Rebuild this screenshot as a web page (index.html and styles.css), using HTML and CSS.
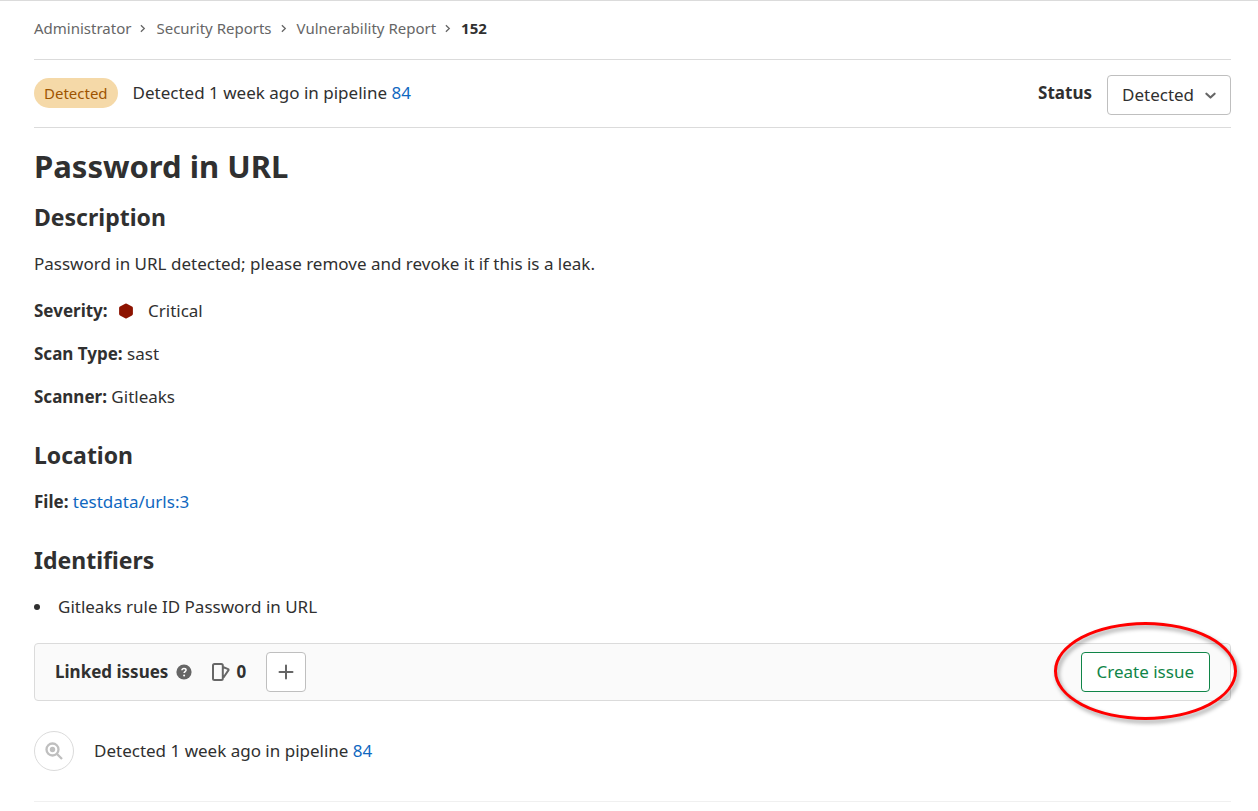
FILE: index.html
```html
<!DOCTYPE html>
<html lang="en">
<head>
<meta charset="utf-8">
<meta name="viewport" content="width=device-width, initial-scale=1">
<title>Password in URL</title>
<link rel="stylesheet" href="styles.css">
</head>
<body>
<div class="page">
  <nav class="breadcrumbs" aria-label="Breadcrumbs">
    <a href="#">Administrator</a>
    <svg class="separator" viewBox="0 0 10 10" aria-hidden="true"><path d="M3 2.500 5.600 5 3 7.500"/></svg>
    <a href="#">Security Reports</a>
    <svg class="separator" viewBox="0 0 10 10" aria-hidden="true"><path d="M3 2.500 5.600 5 3 7.500"/></svg>
    <a href="#">Vulnerability Report</a>
    <svg class="separator" viewBox="0 0 10 10" aria-hidden="true"><path d="M3 2.500 5.600 5 3 7.500"/></svg>
    <a class="current" href="#" aria-current="page">152</a>
  </nav>

  <header class="status-bar">
    <span class="badge">Detected</span>
    <span class="status-text">Detected 1 week ago in pipeline <a href="#">84</a></span>
    <label class="status-label" for="status">Status</label>
    <div class="select">
      <select id="status"><option>Detected</option></select>
      <svg class="chevron" viewBox="0 0 12 12" aria-hidden="true"><path d="m2.200 4.400 3.800 3.500 3.800-3.500"/></svg>
    </div>
  </header>

  <main>
    <h1>Password in URL</h1>

    <section>
      <h2>Description</h2>
      <p class="description">Password in URL detected; please remove and revoke it if this is a leak.</p>
      <ul class="fields">
        <li><strong>Severity:</strong> <svg class="severity-icon" viewBox="0 0 16 16" aria-hidden="true"><path d="M7.2.8a1.7 1.7 0 0 1 1.6 0l5.2 2.8a1.6 1.6 0 0 1 .9 1.4v6a1.6 1.6 0 0 1-.9 1.4l-5.2 2.8a1.7 1.7 0 0 1-1.6 0L2 12.4a1.6 1.6 0 0 1-.9-1.4V5A1.600 1.600 0 0 1 2 3.600z"/></svg>Critical</li>
        <li><strong>Scan Type:</strong> sast</li>
        <li><strong>Scanner:</strong> Gitleaks</li>
      </ul>
    </section>

    <section>
      <h2>Location</h2>
      <p><strong>File:</strong> <a href="#">testdata/urls:3</a></p>
    </section>

    <section>
      <h2>Identifiers</h2>
      <ul class="identifiers"><li>Gitleaks rule ID Password in URL</li></ul>
    </section>

    <section class="linked">
      <h3>Linked issues</h3>
      <a class="help" href="#" aria-label="Read more about related issues">
        <svg viewBox="0 0 16 16" aria-hidden="true"><circle cx="8" cy="8" r="7.600" fill="#666"/><path d="M5.900 6.300c.1-1.200.9-1.900 2.100-1.900s2.100.7 2.100 1.700c0 1.500-2 1.600-2 3" fill="none" stroke="#fff" stroke-width="1.500"/><circle cx="8.100" cy="11.400" r="1" fill="#fff"/></svg>
      </a>
      <svg class="issues-icon" viewBox="0 0 18 18" aria-hidden="true"><path d="M2.500 1h6.800a1.500 1.500 0 0 1 1.500 1.500v13a1.500 1.500 0 0 1-1.500 1.500H2.500A1.500 1.500 0 0 1 1 15.500v-13A1.500 1.500 0 0 1 2.500 1zM11.500 4.200l4.600 1.900a.8.800 0 0 1 .4 1L11.500 14.500" fill="none" stroke="#666" stroke-width="2" stroke-linejoin="round"/></svg>
      <strong>0</strong>
      <button class="add" type="button" aria-label="Add a related issue">
        <svg viewBox="0 0 16 16" aria-hidden="true"><path d="M8 1.500v13M1.500 8h13"/></svg>
      </button>
      <div class="create-wrap">
        <button class="create" type="button">Create issue</button>
        <span class="highlight" aria-hidden="true"></span>
      </div>
    </section>

    <section class="note">
      <span class="note-icon"><svg viewBox="0 0 18 18" aria-hidden="true"><circle cx="7.500" cy="7.500" r="6"/><path d="m12 12 5 5"/><circle class="dot" cx="7.500" cy="7.500" r="2.700"/></svg></span>
      <p>Detected 1 week ago in pipeline <a href="#">84</a></p>
    </section>
  </main>
</div>
</body>
</html>
```
FILE: styles.css
```css
* { box-sizing: border-box; }

body {
  margin: 0;
  border-top: 1px solid #dbdbdb;
  background: #fff;
  color: #303030;
  font: 17px/24px "Noto Sans", sans-serif;
}

a { color: #1068bf; text-decoration: none; }
h1, h2, h3, p, ul { margin: 0; padding: 0; }
ul { list-style: none; }
strong, h1, h2, h3 { font-weight: 700; }

.page { padding: 0 27px 0 34px; }

.breadcrumbs {
  display: flex;
  align-items: center;
  gap: 6px;
  padding: 15px 0 19px;
  border-bottom: 1px solid #dbdbdb;
  font-size: 15px;
}
.breadcrumbs a { color: #666; }
.breadcrumbs .current { color: #303030; font-weight: 700; }
.separator { width: 13px; height: 13px; fill: none; stroke: #666; stroke-width: 1; }

.status-bar {
  display: flex;
  align-items: flex-start;
  padding: 15px 0 12px;
  border-bottom: 1px solid #dbdbdb;
}
.badge {
  margin-top: 3px;
  padding: 0 10px;
  border-radius: 15px;
  background: #f5d9a8;
  color: #9e5400;
  font-size: 15px;
  line-height: 30px;
}
.status-text, .status-label { line-height: 36px; }
.status-text { margin-left: 15px; }
.status-label { margin: 0 15px 0 auto; font-weight: 700; }

.select { position: relative; }
select {
  appearance: none;
  height: 40px;
  padding: 0 35px 0 14px;
  border: 1px solid #bfbfbf;
  border-radius: 4px;
  background: #fff;
  color: #303030;
  font: inherit;
}
.chevron {
  position: absolute;
  top: 14px;
  right: 14px;
  width: 13px;
  height: 13px;
  fill: none;
  stroke: #666;
  stroke-width: 2;
  stroke-linecap: round;
  stroke-linejoin: round;
  pointer-events: none;
}

h1 { margin: 20px 0 18px; font-size: 31px; line-height: 36px; }
h2 { margin-bottom: 20px; font-size: 23px; line-height: 30px; }
section + section { margin-top: 31px; }

.description { margin-bottom: 23px; }
.fields { display: grid; gap: 19px; }
.severity-icon { width: 16px; height: 16px; margin: 0 14px 0 6px; vertical-align: -2px; fill: #8d1300; }

.identifiers li { display: flex; align-items: center; gap: 18px; }
.identifiers li::before {
  width: 6px;
  height: 6px;
  border-radius: 50%;
  background: #303030;
  content: "";
}

section.linked {
  display: flex;
  align-items: center;
  margin-top: 24px;
  padding: 8px 20px;
  border: 1px solid #dbdbdb;
  border-radius: 4px;
  background: #fafafa;
}
h3 { font-size: 17px; }
.help { display: flex; margin: 0 20px 0 8px; }
.help svg { width: 16px; height: 16px; }
.issues-icon { width: 18px; height: 18px; margin-right: 6px; }
.add, .create {
  height: 40px;
  border-radius: 4px;
  background: #fff;
  font: inherit;
}
.add {
  display: grid;
  place-items: center;
  width: 40px;
  margin-left: 20px;
  padding: 0;
  border: 1px solid #bfbfbf;
}
.add svg { width: 16px; height: 16px; stroke: #666; stroke-width: 2; stroke-linecap: round; }
.create-wrap { position: relative; margin-left: auto; }
.create { display: block; padding: 0 15px; border: 1px solid #108548; color: #108548; }
.highlight {
  position: absolute;
  inset: -30px -27px -28px;
  border: 3px solid #f00;
  border-radius: 50%;
  filter: drop-shadow(2px 3px 2px #0006);
  pointer-events: none;
}

section.note {
  display: flex;
  align-items: center;
  gap: 20px;
  margin-top: 30px;
  padding-bottom: 30px;
  border-bottom: 1px solid #f0f0f0;
}
.note-icon {
  display: grid;
  place-items: center;
  width: 40px;
  height: 40px;
  border: 1px solid #dbdbdb;
  border-radius: 50%;
}
.note-icon svg { width: 18px; height: 18px; fill: none; stroke: #bfbfbf; stroke-width: 2.300; }
.note-icon .dot { fill: #bfbfbf; stroke: none; }
```
